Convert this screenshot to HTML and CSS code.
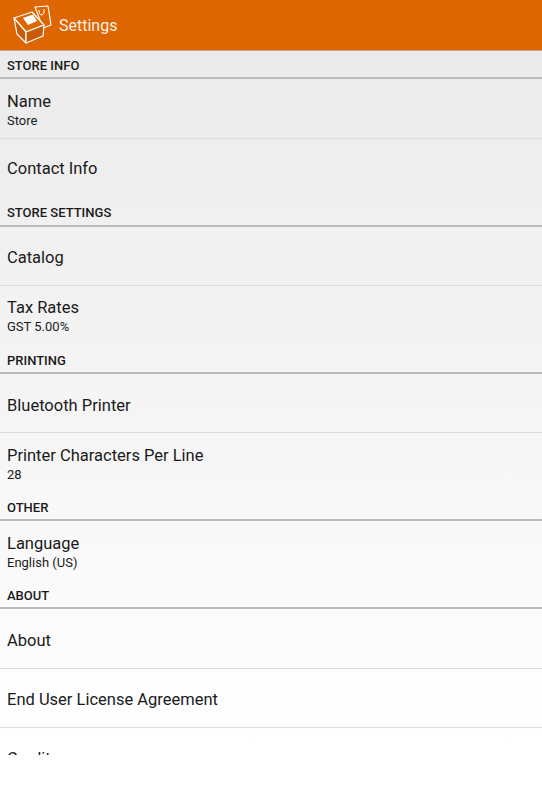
FILE: index.html
```html
<!DOCTYPE html>
<html lang="en">
  <head>
    <meta charset="UTF-8">
    <title>Settings</title>
    <link rel="stylesheet" href="styles.css">
  </head>
  <body>

    <div class="app-bar">
      <svg class="app-icon" width="40" height="40" viewBox="0 0 40 40">
        <g fill="#c85a0a" stroke="#fff" stroke-width="1.200" stroke-linejoin="round">
          <path d="M22 2 L35 1 L38 20 L30 23 Z" fill="#de6600"/>
          <path d="M1 13 L19 7 L31 20 L13 27 Z" fill="#de6600"/>
          <path d="M1 13 L13 27 L13 38 L4 29 Z"/>
          <path d="M13 27 L31 20 L30 31 L13 38 Z"/>
        </g>
        <path d="M10 13 L20 9.500 L24 16 L15 20 Z" fill="#fff"/>
        <path d="M26 5 Q26 10 29 10 Q32 9 31 4" fill="none" stroke="#fff" stroke-width="1"/>
      </svg>
      <div class="app-title">Settings</div>
    </div>

    <div class="settings">
      <div class="section-head">Store Info</div>
      <div class="row">
        <div class="row-title">Name</div>
        <div class="row-sub">Store</div>
      </div>
      <div class="row last">
        <div class="row-title">Contact Info</div>
      </div>

      <div class="section-head">Store Settings</div>
      <div class="row">
        <div class="row-title">Catalog</div>
      </div>
      <div class="row last">
        <div class="row-title">Tax Rates</div>
        <div class="row-sub">GST 5.00%</div>
      </div>

      <div class="section-head">Printing</div>
      <div class="row">
        <div class="row-title">Bluetooth Printer</div>
      </div>
      <div class="row last">
        <div class="row-title">Printer Characters Per Line</div>
        <div class="row-sub">28</div>
      </div>

      <div class="section-head">Other</div>
      <div class="row last">
        <div class="row-title">Language</div>
        <div class="row-sub">English (US)</div>
      </div>

      <div class="section-head">About</div>
      <div class="row">
        <div class="row-title">About</div>
      </div>
      <div class="row">
        <div class="row-title">End User License Agreement</div>
      </div>
      <div class="row last">
        <div class="row-title">Credits</div>
      </div>
    </div>

  </body>
</html>
```

FILE: styles.css
```css
html, body {
  margin: 0;
  padding: 0;
  box-sizing: border-box;
}
body {
  width: 542px;
  height: 800px;
  overflow: hidden;
  font-family: Roboto, sans-serif;
  color: #1a1a1a;
  background-color: #fff;
}
*, *:before, *:after {
  box-sizing: inherit;
}
.app-bar {
  display: flex;
  align-items: center;
  height: 50.700px;
  padding-left: 13px;
  background-color: #de6600;
  border-bottom: 1px solid #c9a58c;
}
.app-icon {
  flex: none;
  margin-right: 6px;
}
.app-title {
  padding-top: 2px;
  font-size: 16px;
  color: #fff;
  opacity: 0.9;
}
.settings {
  height: 704.300px;
  overflow: hidden;
  background: linear-gradient(#ebebeb, #fff);
}
.section-head {
  display: flex;
  align-items: center;
  height: 28.600px;
  padding: 3px 7px 0;
  font-size: 13px;
  font-weight: 500;
  text-transform: uppercase;
  border-bottom: 2px solid #bbb;
}
.row {
  display: flex;
  flex-direction: column;
  justify-content: center;
  height: 59.400px;
  padding: 4px 7px 0;
  border-bottom: 1px solid #dcdcdc;
}
.row.last {
  padding-top: 1px;
  border-bottom: none;
}
.row-title {
  font-size: 16.500px;
  line-height: 21px;
}
.row-sub {
  font-size: 13px;
  line-height: 17px;
}
```
